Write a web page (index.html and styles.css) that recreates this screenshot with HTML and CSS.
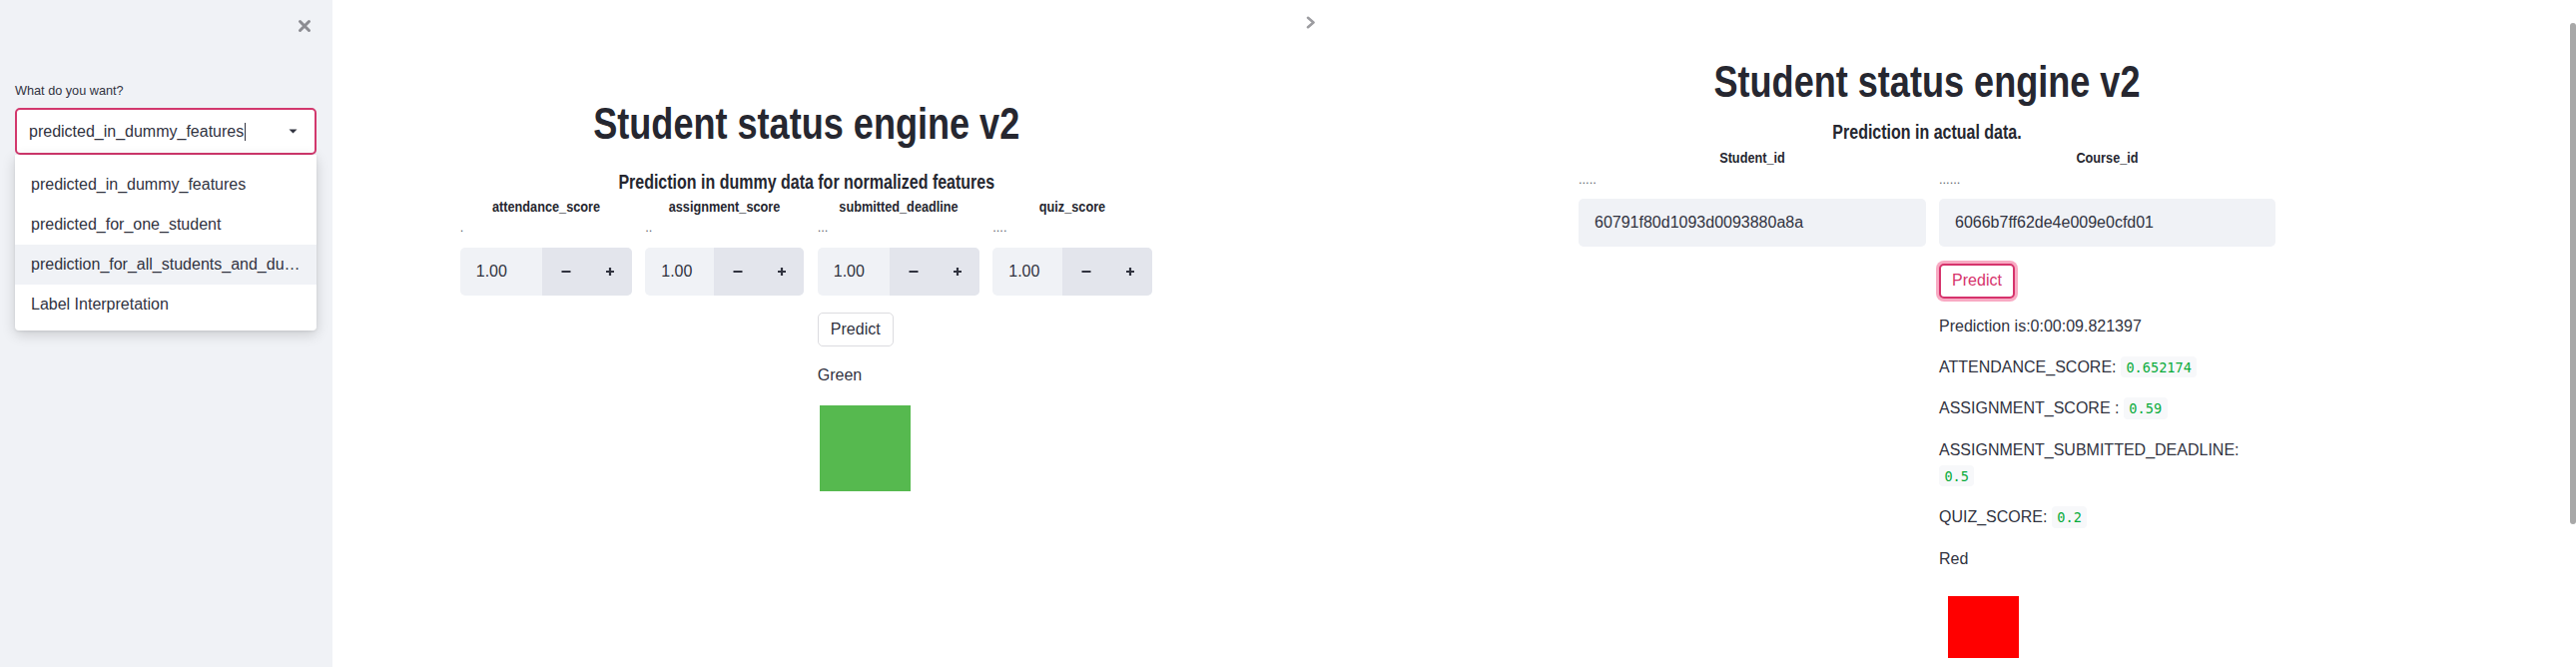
FILE: index.html
```html
<!DOCTYPE html>
<html lang="en">
<head>
<meta charset="utf-8">
<title>Student status engine v2</title>
<link rel="stylesheet" href="styles.css">
</head>
<body>
<div class="shot shot-left">
  <aside class="sidebar">
    <div class="sidebar-top">
      <span class="close-btn" aria-label="Close sidebar">
        <svg width="14" height="14" viewBox="0 0 14 14"><path d="M2.5 2.5L11.5 11.5M11.5 2.5L2.5 11.5" stroke="#8c8c92" stroke-width="3" stroke-linecap="round" fill="none"/></svg>
      </span>
    </div>
    <div class="side-label">What do you want?</div>
    <div class="select">
      <div class="select-box">
        <span class="select-value">predicted_in_dummy_features</span><span class="text-caret"></span>
        <svg class="select-arrow" width="9" height="5" viewBox="0 0 9 5"><path d="M0.5 0.5H8.5L4.5 4.5Z" fill="#31333f"/></svg>
      </div>
      <ul class="menu">
        <li class="menu-item">predicted_in_dummy_features</li>
        <li class="menu-item">predicted_for_one_student</li>
        <li class="menu-item menu-item-hover">prediction_for_all_students_and_dummy_data</li>
        <li class="menu-item">Label Interpretation</li>
      </ul>
    </div>
  </aside>
  <main class="main main-left">
    <div class="block block-left">
      <h1 class="title">Student status engine v2</h1>
      <h4 class="subtitle subtitle-left">Prediction in dummy data for normalized features</h4>
      <div class="cols cols-4">
        <div class="col">
          <h5 class="col-label">attendance_score</h5>
          <div class="dots">.</div>
          <div class="num-input">
            <span class="num-value">1.00</span>
            <span class="step"><svg width="10" height="10" viewBox="0 0 10 10"><path d="M0.5 5H9.5" stroke="#31333f" stroke-width="2.2"/></svg></span>
            <span class="step"><svg width="10" height="10" viewBox="0 0 10 10"><path d="M1 5H9M5 1V9" stroke="#31333f" stroke-width="2.2"/></svg></span>
          </div>
        </div>
        <div class="col">
          <h5 class="col-label">assignment_score</h5>
          <div class="dots">..</div>
          <div class="num-input">
            <span class="num-value">1.00</span>
            <span class="step"><svg width="10" height="10" viewBox="0 0 10 10"><path d="M0.5 5H9.5" stroke="#31333f" stroke-width="2.2"/></svg></span>
            <span class="step"><svg width="10" height="10" viewBox="0 0 10 10"><path d="M1 5H9M5 1V9" stroke="#31333f" stroke-width="2.2"/></svg></span>
          </div>
        </div>
        <div class="col">
          <h5 class="col-label">submitted_deadline</h5>
          <div class="dots">...</div>
          <div class="num-input">
            <span class="num-value">1.00</span>
            <span class="step"><svg width="10" height="10" viewBox="0 0 10 10"><path d="M0.5 5H9.5" stroke="#31333f" stroke-width="2.2"/></svg></span>
            <span class="step"><svg width="10" height="10" viewBox="0 0 10 10"><path d="M1 5H9M5 1V9" stroke="#31333f" stroke-width="2.2"/></svg></span>
          </div>
          <button class="btn btn-plain">Predict</button>
          <p class="para para-first">Green</p>
          <div class="swatch swatch-green"></div>
        </div>
        <div class="col">
          <h5 class="col-label">quiz_score</h5>
          <div class="dots">....</div>
          <div class="num-input">
            <span class="num-value">1.00</span>
            <span class="step"><svg width="10" height="10" viewBox="0 0 10 10"><path d="M0.5 5H9.5" stroke="#31333f" stroke-width="2.2"/></svg></span>
            <span class="step"><svg width="10" height="10" viewBox="0 0 10 10"><path d="M1 5H9M5 1V9" stroke="#31333f" stroke-width="2.2"/></svg></span>
          </div>
        </div>
      </div>
    </div>
  </main>
</div>
<div class="shot shot-right">
  <span class="expand-btn" aria-label="Open sidebar">
    <svg width="10" height="13" viewBox="0 0 10 13"><path d="M2 1.8L7.5 6.5L2 11.2" stroke="#9c9ca0" stroke-width="2.6" fill="none" stroke-linecap="round" stroke-linejoin="round"/></svg>
  </span>
  <main class="main main-right">
    <div class="block block-right">
      <h1 class="title">Student status engine v2</h1>
      <h4 class="subtitle subtitle-right">Prediction in actual data.</h4>
      <div class="cols cols-2">
        <div class="col">
          <h5 class="col-label">Student_id</h5>
          <div class="dots">.....</div>
          <div class="text-input">60791f80d1093d0093880a8a</div>
        </div>
        <div class="col">
          <h5 class="col-label">Course_id</h5>
          <div class="dots">......</div>
          <div class="text-input">6066b7ff62de4e009e0cfd01</div>
          <button class="btn btn-focus">Predict</button>
          <p class="para para-first">Prediction is:0:00:09.821397</p>
          <p class="para">ATTENDANCE_SCORE: <code class="code">0.652174</code></p>
          <p class="para">ASSIGNMENT_SCORE : <code class="code">0.59</code></p>
          <p class="para">ASSIGNMENT_SUBMITTED_DEADLINE: <code class="code">0.5</code></p>
          <p class="para">QUIZ_SCORE: <code class="code">0.2</code></p>
          <p class="para">Red</p>
          <div class="swatch swatch-red"></div>
        </div>
      </div>
    </div>
  </main>
  <div class="scrollbar"></div>
</div>
</body>
</html>
```

FILE: styles.css
```css
* { box-sizing: border-box; }
html, body { margin: 0; padding: 0; }
body {
  width: 2580px;
  height: 668px;
  overflow: hidden;
  display: flex;
  background: #ffffff;
  font-family: "Liberation Sans", Arial, sans-serif;
  color: #31333f;
}
.shot {
  width: 1290px;
  height: 668px;
  flex: none;
  position: relative;
  display: flex;
}

/* Sidebar */
.sidebar {
  width: 333px;
  flex: none;
  background: #f0f2f6;
  padding: 19px 16px 0 15px;
  display: flex;
  flex-direction: column;
}
.sidebar-top {
  display: flex;
  justify-content: flex-end;
  padding-right: 5px;
  height: 14px;
}
.close-btn { display: block; width: 14px; height: 14px; }
.close-btn svg { display: block; }
.side-label {
  margin-top: 51px;
  font-size: 12.7px;
  line-height: 15px;
  color: #31333f;
}
.select {
  position: relative;
  margin-top: 9px;
}
.select-box {
  height: 47px;
  border: 2px solid #d2386d;
  border-radius: 5px;
  background: #ffffff;
  display: flex;
  align-items: center;
  padding: 0 0 0 12px;
  font-size: 16px;
  color: #31333f;
}
.text-caret {
  width: 1px;
  height: 18px;
  background: #31333f;
  margin-left: 1px;
}
.select-arrow {
  margin-left: auto;
  margin-right: 17px;
  display: block;
}
.menu {
  position: absolute;
  top: 100%;
  left: 0;
  right: 0;
  margin: 0;
  padding: 10px 0 6px;
  list-style: none;
  background: #ffffff;
  border-radius: 0 0 4px 4px;
  box-shadow: 0 4px 14px rgba(0, 0, 0, 0.16), 0 1px 3px rgba(0, 0, 0, 0.08);
  z-index: 5;
}
.menu-item {
  height: 40px;
  line-height: 40px;
  padding: 0 15px 0 16px;
  font-size: 16px;
  color: #31333f;
  white-space: nowrap;
  overflow: hidden;
  text-overflow: ellipsis;
}
.menu-item-hover { background: #f0f2f6; }

/* Main areas */
.main {
  flex: 1;
  display: flex;
  justify-content: center;
}
.main-left { padding-right: 8px; }
.main-right { padding-right: 10px; }
.block-left { width: 693.5px; padding-top: 98px; }
.block-right { width: 698px; padding-top: 56px; }

.title,
.subtitle,
.col-label {
  margin: 0;
  font-family: "Liberation Sans Narrow", "Liberation Sans", Arial, sans-serif;
  font-weight: 700;
  text-align: center;
  color: #262730;
  transform: scaleX(0.82);
  transform-origin: 50% 50%;
}
.title {
  font-size: 44px;
  line-height: 1.2;
}
.subtitle {
  font-size: 19.5px;
  line-height: 1.2;
}
.subtitle-left { margin-top: 20.7px; }
.subtitle-right { margin-top: 12.5px; }

.cols { display: grid; align-items: start; }
.cols-4 {
  margin-top: 2.8px;
  grid-template-columns: 172px 159px 162px 160px;
  column-gap: 13.5px;
}
.cols-2 {
  margin-top: 4px;
  grid-template-columns: 348px 337px;
  column-gap: 13px;
}
.col { display: flex; flex-direction: column; align-items: stretch; }
.col-label {
  font-size: 15.5px;
  line-height: 18.6px;
}
.dots {
  margin-top: 4.2px;
  height: 16px;
  font-size: 12.8px;
  line-height: 16px;
  color: #5d5f69;
}
.cols-2 .dots { margin-top: 4.5px; }

.num-input {
  margin-top: 11.5px;
  height: 48px;
  display: flex;
  border-radius: 5px;
  overflow: hidden;
  background: #f0f2f6;
}
.num-value {
  flex: 1;
  padding-left: 16px;
  font-size: 16px;
  line-height: 48px;
  color: #31333f;
}
.step {
  width: 44px;
  flex: none;
  background: #e3e5ec;
  display: flex;
  align-items: center;
  justify-content: center;
}
.step svg { display: block; }
.num-value + .step { width: 46px; padding-left: 2px; }

.text-input {
  margin-top: 11.2px;
  height: 48px;
  border-radius: 5px;
  background: #f0f2f6;
  padding-left: 16px;
  font-size: 16px;
  line-height: 48px;
  color: #31333f;
}

.btn {
  align-self: flex-start;
  margin-top: 17px;
  height: 34px;
  width: 76px;
  padding: 0;
  border-radius: 5px;
  background: #ffffff;
  font-family: "Liberation Sans", Arial, sans-serif;
  font-size: 16px;
  line-height: 1;
}
.btn-plain {
  border: 1px solid #dcdce0;
  color: #31333f;
}
.btn-focus {
  height: 35px;
  border: 2px solid #d6336c;
  color: #d6336c;
  box-shadow: 0 0 0 3px rgba(242, 100, 146, 0.55);
}

.para {
  margin: 0 0 15px 0;
  font-size: 16px;
  line-height: 25.6px;
  color: #31333f;
}
.para-first { margin-top: 16px; }
.btn-focus + .para-first { margin-top: 15px; }
.code {
  font-family: "DejaVu Sans Mono", "Liberation Mono", monospace;
  font-size: 13.6px;
  color: #09ab3b;
  background: #f7f8fa;
  padding: 0.2em 0.4em;
  border-radius: 4px;
}

.swatch { flex: none; }
.swatch-green {
  margin-top: 2.5px;
  margin-left: 2px;
  width: 91px;
  height: 86px;
  background: #56b94f;
}
.swatch-red {
  margin-top: 9.5px;
  margin-left: 9px;
  width: 71px;
  height: 62px;
  background: #ff0000;
}

/* Right screenshot overlays */
.expand-btn {
  position: absolute;
  left: 18px;
  top: 16px;
  width: 10px;
  height: 13px;
}
.expand-btn svg { display: block; }
.scrollbar {
  position: absolute;
  right: 0;
  top: 23px;
  width: 6px;
  height: 502px;
  border-radius: 3px;
  background: #a8a8a8;
}
```
